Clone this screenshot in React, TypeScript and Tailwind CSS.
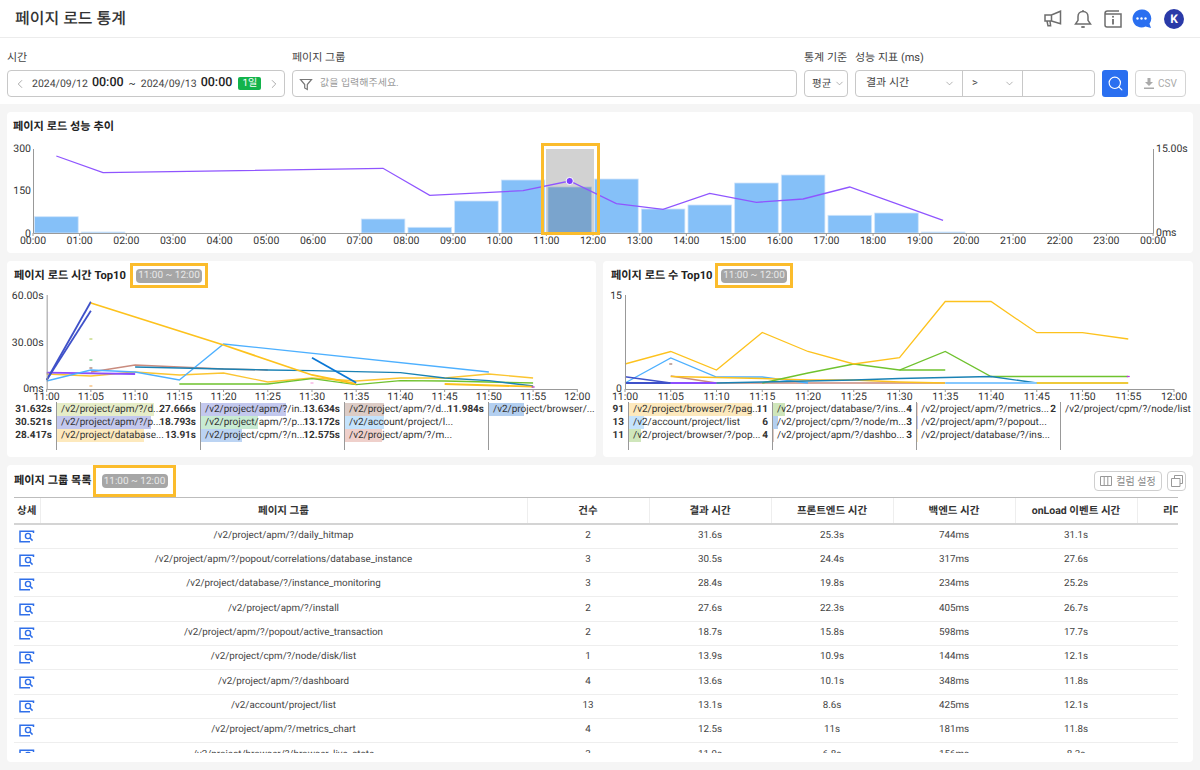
import React from 'react';
import { ChevronDown, ChevronLeft, ChevronRight, Search } from 'lucide-react';

const barHeights = [16.3, 1, 0, 0, 0, 0, 0, 14, 5.7, 32, 53, 46, 54, 24, 28, 50, 58, 17.7, 20, 1, 0, 0, 0, 0];
const trend: [number, number][] = [[0.5, 156], [1.5, 172.7], [7.5, 168.3], [8.5, 195.3], [10.5, 190.7], [11.5, 181], [12.5, 203.7], [13.5, 209.3], [14.5, 193.3], [15.5, 202.3], [16.5, 199], [17.5, 187], [19.5, 220.3]];

type Series = { color: string; width?: number; pts: [number, number][] };

const loadTimeSeries: Series[] = [
  { color: '#fbc531', width: 1.3, pts: [[0, 374], [1, 376], [2, 372], [3, 375], [4, 373], [5, 382], [6, 378], [7, 381], [8, 378], [9, 378], [10, 374], [11, 378]] },
  { color: '#c98b7e', width: 1.3, pts: [[1, 372], [2, 365], [3, 367], [4, 369], [5, 370]] },
  { color: '#8c4dff', width: 1.8, pts: [[0, 372.6], [2, 374]] },
  { color: '#4db0ff', width: 1.3, pts: [[0, 381], [1, 370], [2, 372], [3, 380], [4, 344], [10, 372]] },
  { color: '#6fc22e', width: 1.3, pts: [[3, 384], [5, 384], [6, 378.7], [7, 384.7], [8, 380.7], [9, 381], [11, 383]] },
  { color: '#1a82b4', width: 1.3, pts: [[2, 367], [3, 368], [4, 369], [5, 370], [6, 370.7], [8, 372.7], [9, 378], [10, 380.7], [11, 386]] },
  { color: '#3f51c9', width: 1.8, pts: [[0, 380], [1, 301.7]] },
  { color: '#3f51c9', width: 1.8, pts: [[0, 380], [1, 310.7]] },
  { color: '#fdc21d', width: 1.8, pts: [[1, 303], [4, 345], [6, 375], [7, 384]] },
  { color: '#0a77d5', width: 1.8, pts: [[6, 357.7], [7, 382.7]] },
  { color: '#fdc21d', width: 1.8, pts: [[9, 384], [11, 386.7]] },
];

const loadCountSeries: Series[] = [
  { color: '#c98b7e', width: 1.3, pts: [[1, 376], [2, 383], [7, 383]] },
  { color: '#4db0ff', width: 1.3, pts: [[0, 383], [1, 358], [2, 377], [3, 377], [4, 383]] },
  { color: '#3f51c9', width: 1.5, pts: [[0, 376.7], [1, 383]] },
  { color: '#3f51c9', width: 1.8, pts: [[0, 383], [1, 383]] },
  { color: '#8c4dff', width: 1.8, pts: [[1, 383], [2, 383]] },
  { color: '#fdc21d', width: 1.4, pts: [[1, 376.5], [2, 377.5], [3, 378.5], [4, 380], [5, 380], [6, 382], [7, 383]] },
  { color: '#6fc22e', width: 1.3, pts: [[3, 383], [4, 373], [5, 364], [6, 370], [7, 351.5], [8, 376.5], [11, 376.5]] },
  { color: '#6fc22e', width: 1.3, pts: [[6, 370], [7, 370]] },
  { color: '#1a82b4', width: 1.4, pts: [[2, 383], [3, 382], [4, 381], [5, 380], [6, 378.5], [8, 376.5], [9, 383]] },
  { color: '#85c8ff', width: 2, pts: [[7, 383], [9, 383]] },
  { color: '#eec93a', width: 2, pts: [[9, 383], [11, 383]] },
  { color: '#fdc21d', width: 1.3, pts: [[0, 364], [1, 351.5], [2, 370], [3, 332.5], [4, 351.5], [5, 364], [6, 357.6], [7, 301.5], [8, 301.5], [9, 332.7], [10, 332.7], [11, 339]] },
];

const timeLabels = ['11:00', '11:05', '11:10', '11:15', '11:20', '11:25', '11:30', '11:35', '11:40', '11:45', '11:50', '11:55', '12:00'];

type LegendRow = { value: string; name: string; color?: string; bar?: number };

const timeLegend: LegendRow[][] = [
  [
    { value: '31.632s', name: '/v2/project/apm/?/d...', color: '#e6edc8', bar: 97 },
    { value: '30.521s', name: '/v2/project/apm/?/p...', color: '#c3c8ee', bar: 94 },
    { value: '28.417s', name: '/v2/project/database...', color: '#fde9bd', bar: 87 },
  ],
  [
    { value: '27.666s', name: '/v2/project/apm/?/in...', color: '#c3c8ee', bar: 85 },
    { value: '18.793s', name: '/v2/project/apm/?/p...', color: '#c8ebd3', bar: 57 },
    { value: '13.91s', name: '/v2/project/cpm/?/n...', color: '#bcd4f3', bar: 41 },
  ],
  [
    { value: '13.634s', name: '/v2/project/apm/?/d...', color: '#dcccc6', bar: 39 },
    { value: '13.172s', name: '/v2/account/project/l...', color: '#c5e3fc', bar: 39 },
    { value: '12.575s', name: '/v2/project/apm/?/m...', color: '#efd0cb', bar: 37 },
  ],
  [{ value: '11.984s', name: '/v2/project/browser/...', color: '#b3cff0', bar: 35 }],
];

const countLegend: LegendRow[][] = [
  [
    { value: '91', name: '/v2/project/browser/?/pag...', color: '#fde9bd', bar: 123 },
    { value: '13', name: '/v2/account/project/list', color: '#c5e3fc', bar: 15 },
    { value: '11', name: '/v2/project/browser/?/pop...', color: '#cfe6bb', bar: 12 },
  ],
  [
    { value: '11', name: '/v2/project/database/?/ins...', color: '#cfe6bb', bar: 12 },
    { value: '6', name: '/v2/project/cpm/?/node/m...', color: '#b3cff0', bar: 5 },
    { value: '4', name: '/v2/project/apm/?/dashbo...', color: '#dcccc6', bar: 1 },
  ],
  [
    { value: '4', name: '/v2/project/apm/?/metrics...', color: '#efd0cb', bar: 1 },
    { value: '3', name: '/v2/project/apm/?/popout...', color: '#c3c8ee', bar: 1 },
    { value: '3', name: '/v2/project/database/?/ins...', color: '#fde9bd', bar: 1 },
  ],
  [{ value: '2', name: '/v2/project/cpm/?/node/list' }],
];

const rows = [
  ['/v2/project/apm/?/daily_hitmap', '2', '31.6s', '25.3s', '744ms', '31.1s'],
  ['/v2/project/apm/?/popout/correlations/database_instance', '3', '30.5s', '24.4s', '317ms', '27.6s'],
  ['/v2/project/database/?/instance_monitoring', '3', '28.4s', '19.8s', '234ms', '25.2s'],
  ['/v2/project/apm/?/install', '2', '27.6s', '22.3s', '405ms', '26.7s'],
  ['/v2/project/apm/?/popout/active_transaction', '2', '18.7s', '15.8s', '598ms', '17.7s'],
  ['/v2/project/cpm/?/node/disk/list', '1', '13.9s', '10.9s', '144ms', '12.1s'],
  ['/v2/project/apm/?/dashboard', '4', '13.6s', '10.1s', '348ms', '11.8s'],
  ['/v2/account/project/list', '13', '13.1s', '8.6s', '425ms', '12.1s'],
  ['/v2/project/apm/?/metrics_chart', '4', '12.5s', '11s', '181ms', '11.8s'],
  ['/v2/project/browser/?/browser_live_state', '3', '11.9s', '6.8s', '156ms', '8.3s'],
];

const headers = ['상세', '페이지 그룹', '건수', '결과 시간', '프론트엔드 시간', '백엔드 시간', 'onLoad 이벤트 시간', '리다이렉트 시간'];

const poly = (pts: [number, number][], x0: number, step: number) =>
  pts.map(([i, y]) => `${x0 + i * step},${y}`).join(' ');

function RangeBadge() {
  return <span className="rounded-[4px] bg-[#a6a6a6] h-[14px] w-[66px] flex items-center justify-center text-[10px] font-normal text-[#e8e8e8] whitespace-nowrap">11:00 ~ 12:00</span>;
}

function TrendChart() {
  const hx = (h: number) => 33 + h * 46.67;
  return (
    <svg viewBox="7 143 1186 108" className="block w-[1186px] h-[108px]">
      {barHeights.map((h, i) => h > 0 && (
        <rect key={i} x={hx(i) + 1.6} y={233 - h} width={43.6} height={h} fill="#85c0f8" stroke="#cfe4fb" strokeWidth="0.8" />
      ))}
      <rect x={546} y={149} width={48} height={84} fill="#5d5d5d" fillOpacity="0.28" />
      <polyline points={trend.map(([h, y]) => `${hx(h)},${y}`).join(' ')} fill="none" stroke="#8f55ff" strokeWidth="1.3" />
      <circle cx={hx(11.5)} cy={181} r="3.6" fill="#7a3fff" stroke="#fff" strokeWidth="1" />
      <path d="M33.5 149V233.5H1153.5V149" fill="none" stroke="#999" strokeWidth="1" />
      {Array.from({ length: 25 }, (_, i) => (
        <g key={i}>
          <line x1={hx(i)} x2={hx(i)} y1={233} y2={236} stroke="#999" />
          <text x={hx(i)} y={244} textAnchor="middle" fontSize="10.5" fill="#333">{`${String(i === 24 ? 0 : i).padStart(2, '0')}:00`}</text>
        </g>
      ))}
      <text x={31} y={152} textAnchor="end" fontSize="10.5" fill="#333">300</text>
      <text x={31} y={194} textAnchor="end" fontSize="10.5" fill="#333">150</text>
      <text x={31} y={237} textAnchor="end" fontSize="10.5" fill="#333">0</text>
      <text x={1156} y={152} fontSize="10.5" fill="#333">15.00s</text>
      <text x={1156} y={236} fontSize="10.5" fill="#333">0ms</text>
      <rect x={542.5} y={144.5} width={56} height={89} fill="none" stroke="#fbbc2c" strokeWidth="3" />
    </svg>
  );
}

function TopChart({ x0, step, series, yLabels, vx, dots, width }: {
  x0: number; step: number; series: Series[]; yLabels: [string, number][]; vx: number; width: number;
  dots: [number, number, string][];
}) {
  return (
    <svg viewBox={`${vx} 290 ${width} 112`} width={width} height={112} className="block">
      {series.map((s, i) => (
        <polyline key={i} points={poly(s.pts, x0, step)} fill="none" stroke={s.color} strokeWidth={s.width ?? 1.3} />
      ))}
      {dots.map(([i, y, c], k) => <rect key={k} x={x0 + i * step - 1.5} y={y - 0.6} width="3" height="1.2" fill={c} />)}
      <path d={`M${x0 + 0.5} 295V389.5H${x0 + 12 * step}`} fill="none" stroke="#999" />
      {timeLabels.map((t, i) => (
        <g key={t}>
          <line x1={x0 + i * step} x2={x0 + i * step} y1={389} y2={392} stroke="#999" />
          <text x={x0 + i * step} y={400} textAnchor="middle" fontSize="10.5" fill="#333">{t}</text>
        </g>
      ))}
      {yLabels.map(([t, y]) => <text key={t} x={x0 - 3} y={y} textAnchor="end" fontSize="10.5" fill="#333">{t}</text>)}
    </svg>
  );
}

function Legend({ cols, valueWidth, nameWidth }: { cols: LegendRow[][]; valueWidth: string; nameWidth: string }) {
  return (
    <div className="flex h-[48px] text-[10px] leading-[13px] text-[#333]">
      {cols.map((col, i) => (
        <div key={i} className="flex">
          <div className={`${valueWidth} pr-[4px] pt-[1px] text-right font-bold whitespace-nowrap`}>
            {col.map((r) => <div key={r.name} className="h-[13px]">{r.value}</div>)}
          </div>
          <div className={`${nameWidth} border-l border-[#999] pt-[1px]`}>
            {col.map((r) => (
              <div key={r.name} className="relative h-[13px] pl-[4px] whitespace-nowrap">
                {r.bar ? <div className="absolute left-0 top-0 h-[13px]" style={{ width: r.bar, backgroundColor: r.color }} /> : null}
                <span className="relative">{r.name}</span>
              </div>
            ))}
          </div>
        </div>
      ))}
    </div>
  );
}

function DetailIcon() {
  return (
    <svg width="16" height="13" viewBox="0 0 16 13" fill="none" className="block">
      <path d="M14.5 3V1.2H1V11.8H11" stroke="#2f6fe9" strokeWidth="1.5" />
      <circle cx="9" cy="6" r="2.6" stroke="#2f6fe9" strokeWidth="1.4" />
      <path d="M11 8l2.6 2.6" stroke="#2f6fe9" strokeWidth="1.5" />
    </svg>
  );
}

export default function App() {
  return (
    <div className="w-[1200px] h-[770px] overflow-hidden bg-[#f5f5f5] font-[Roboto,'Noto_Sans_CJK_KR',sans-serif] text-[#333] [text-rendering:geometricPrecision]">
      <header className="h-[38px] bg-white border-b border-[#ececec] pl-[15px] pr-[16px] flex items-center">
        <h1 className="text-[16px] font-medium text-[#333]">페이지 로드 통계</h1>
        <div className="ml-auto flex items-center">
          <svg width="18" height="17" viewBox="0 0 18 17" fill="none" stroke="#6d6d6d" strokeWidth="1.5" className="mr-[12px]">
            <path d="M1 5h6.500L16.500 1.200v12.600L7.500 11H1zM7.500 5v6M3 11l1 4.800h2.600L6 11" />
          </svg>
          <svg width="18" height="20" viewBox="0 0 18 20" fill="none" stroke="#6d6d6d" strokeWidth="1.5" className="mr-[12px]">
            <path d="M9 2.500c-3.200 0-5 2.400-5 5.200v3.600L1.500 15h15L14 11.300V7.700c0-2.800-1.800-5.200-5-5.200zM9 1v1.500" />
            <path d="M7.300 18h3.400" strokeWidth="1.800" />
          </svg>
          <svg width="18" height="18" viewBox="0 0 18 18" fill="none" className="mr-[10px]">
            <path d="M15 1H3.500C2 1 1 2 1 3.500V15c0 1 .8 2 2 2h14V4H1.500" stroke="#6d6d6d" strokeWidth="1.500" />
            <path d="M9 9v5.500" stroke="#6d6d6d" strokeWidth="1.800" />
            <circle cx="9" cy="6.800" r="1" fill="#6d6d6d" />
          </svg>
          <svg width="20" height="20" viewBox="0 0 20 20" className="mr-[12px]">
            <path d="M9.500 0.500a9 9 0 1 0 4 17.100l5.500 1.400-1.500-4.300a9 9 0 0 0-8-14.200z" fill="#2a6ff0" />
            <circle cx="5.500" cy="9.500" r="1.200" fill="#fff" />
            <circle cx="9.500" cy="9.500" r="1.200" fill="#fff" />
            <circle cx="13.500" cy="9.500" r="1.200" fill="#fff" />
          </svg>
          <div className="w-[20px] h-[20px] rounded-full bg-[#2a3aa8] text-white text-[12px] font-bold flex items-center justify-center">K</div>
        </div>
      </header>

      <section className="h-[66px] bg-white pl-[7px] pt-[12px] text-[11px]">
        <div className="flex gap-[7px] h-[20px] items-start text-[#444]">
          <label className="w-[278px]">시간</label>
          <label className="w-[505px]">페이지 그룹</label>
          <label className="w-[44px] whitespace-nowrap">통계 기준</label>
          <label className="w-[240px]">성능 지표 (ms)</label>
        </div>
        <div className="flex gap-[7px] h-[27px] items-stretch">
          <div className="w-[278px] border border-[#c8c8c8] rounded-[4px] flex items-center pl-[5px] text-[10.5px] text-[#444] whitespace-nowrap">
            <ChevronLeft size={14} strokeWidth={1.2} color="#888" />
            <span className="ml-[5px]">2024/09/12</span>
            <span className="ml-[4px] text-[12.500px] font-medium text-[#222]">00:00</span>
            <span className="ml-[5px]">~</span>
            <span className="ml-[5px]">2024/09/13</span>
            <span className="ml-[4px] text-[12.500px] font-medium text-[#222]">00:00</span>
            <span className="ml-[6px] w-[23px] h-[13px] bg-[#12b34b] rounded-[2px] text-white text-[10px] flex items-center justify-center">1일</span>
            <ChevronRight size={14} strokeWidth={1.2} color="#888" className="ml-[6px]" />
          </div>
          <div className="w-[505px] border border-[#c8c8c8] rounded-[4px] flex items-center pl-[6px] text-[#999] text-[10px]">
            <svg width="14" height="14" viewBox="0 0 14 14" fill="none" stroke="#777" strokeWidth="1.200" className="mr-[7px]">
              <path d="M1.500 2.500h11L8.300 7.500v5l-2.600-1.500V7.500z" />
            </svg>
            값을 입력해주세요.
          </div>
          <div className="w-[44px] border border-[#c8c8c8] rounded-[4px] flex items-center pl-[7px] text-[#444] text-[10.5px] gap-[3px]">
            <span className="whitespace-nowrap">평균</span>
            <ChevronDown size={11} strokeWidth={1.200} color="#777" className="shrink-0" />
          </div>
          <div className="w-[240px] border border-[#c8c8c8] rounded-[4px] flex items-center text-[#444]">
            <div className="w-[107px] h-full border-r border-[#c8c8c8] flex items-center justify-between pl-[10px] pr-[7px]">
              <span>결과 시간</span>
              <ChevronDown size={11} strokeWidth={1.200} color="#777" />
            </div>
            <div className="w-[60px] h-full border-r border-[#c8c8c8] flex items-center justify-between pl-[9px] pr-[7px]">
              <span>&gt;</span>
              <ChevronDown size={11} strokeWidth={1.200} color="#777" />
            </div>
          </div>
          <button className="w-[26px] rounded-[3px] bg-[#2a6ff0] flex items-center justify-center">
            <Search size={17} color="#fff" strokeWidth={1.600} />
          </button>
          <button className="w-[51px] border border-[#d4d4d4] rounded-[4px] flex items-center justify-center gap-[4px] text-[#aaa] text-[10px]">
            <svg width="10" height="11" viewBox="0 0 10 11" fill="#aaa" className="block">
              <path d="M3.500 0h3v4H9L5 8 1 4h2.500zM0 9.600h10V11H0z" />
            </svg>
            CSV
          </button>
        </div>
      </section>

      <main className="px-[7px] pt-[8px] flex flex-col gap-[8px]">
        <div className="h-[141px] bg-white rounded-[4px]">
          <div className="h-[31px] pl-[6px] pt-[7px] text-[11.2px] font-bold text-[#222]">페이지 로드 성능 추이</div>
          <TrendChart />
        </div>

        <div className="flex gap-[7px]">
          <div className="w-[589px] h-[196px] bg-white rounded-[4px]">
            <div className="h-[29px] pl-[7px] pt-[2px] flex items-start text-[11.2px] font-bold text-[#222]">
              <span className="mt-[5px] w-[116px] whitespace-nowrap">페이지 로드 시간 Top10</span>
              <div className="w-[78px] h-[25px] border-[3px] border-[#fbbc2c] flex items-center justify-center">
                <RangeBadge />
              </div>
            </div>
            <TopChart x0={46.67} step={44.22} vx={7} width={589} series={loadTimeSeries}
              yLabels={[['60.00s', 299], ['30.00s', 346], ['0ms', 392]]}
              dots={[[1, 339, '#bcd36a'], [1, 360, '#62c27f'], [1, 368, '#a0766b'], [1, 386, '#f5b66a'], [6, 383, '#f3a6dc'], [11, 387, '#a030c8']]} />
            <div className="pl-[8px]"><Legend cols={timeLegend} valueWidth="w-[41px]" nameWidth="w-[103px]" /></div>
          </div>
          <div className="w-[590px] h-[196px] bg-white rounded-[4px]">
            <div className="h-[29px] pl-[8px] pt-[2px] flex items-start text-[11.2px] font-bold text-[#222]">
              <span className="mt-[5px] w-[104px] whitespace-nowrap">페이지 로드 수 Top10</span>
              <div className="w-[78px] h-[25px] border-[3px] border-[#fbbc2c] flex items-center justify-center">
                <RangeBadge />
              </div>
            </div>
            <TopChart x0={625} step={45.75} vx={603} width={590} series={loadCountSeries}
              yLabels={[['15', 299], ['0', 392]]}
              dots={[[1, 364, '#a0766b'], [11, 376.5, '#c030e8']]} />
            <div className="pl-[7px]"><Legend cols={countLegend} valueWidth="w-[18px]" nameWidth="w-[126px]" /></div>
          </div>
        </div>

        <div className="h-[297px] bg-white rounded-[4px] px-[7px] overflow-hidden">
          <div className="h-[32px] flex items-start">
            <span className="mt-[8px] w-[79px] text-[11.2px] font-bold text-[#222] whitespace-nowrap">페이지 그룹 목록</span>
            <div className="w-[83px] h-[32px] border-[3px] border-[#fbbc2c] flex items-center justify-center">
              <RangeBadge />
            </div>
            <div className="ml-auto mt-[6px] flex gap-[5px]">
              <button className="w-[68px] h-[20px] border border-[#cfcfcf] rounded-[4px] flex items-center justify-center gap-[4px] text-[10px] text-[#888]">
                <svg width="12" height="10" viewBox="0 0 12 10" fill="none" stroke="#999"><path d="M.5.500h11v9H.5zM4.200.500v9M7.800.500v9" /></svg>
                컬럼 설정
              </button>
              <button className="w-[19px] h-[20px] border border-[#cfcfcf] rounded-[4px] flex items-center justify-center">
                <svg width="12" height="12" viewBox="0 0 12 12" fill="none" stroke="#999"><path d="M3.500 3V.500h8v8H9M.500 3.500h8.500v8H.500z" /></svg>
              </button>
            </div>
          </div>
          <div className="w-[1164px] h-[256px] overflow-hidden border-t border-[#bdbdbd]">
            <table className="table-fixed w-[1245px] border-collapse text-[9.800px] text-[#444]">
              <colgroup>
                <col className="w-[26px]" />
                <col className="w-[487px]" />
                <col className="w-[122px]" />
                <col className="w-[122px]" />
                <col className="w-[122px]" />
                <col className="w-[122px]" />
                <col className="w-[122px]" />
                <col className="w-[122px]" />
              </colgroup>
              <thead>
                <tr className="h-[26px] border-b-2 border-[#d4d4d4]">
                  {headers.map((h) => (
                    <th key={h} className="text-[10.5px] font-bold text-[#333] border-r border-[#eeeeee] whitespace-nowrap p-0">{h}</th>
                  ))}
                </tr>
              </thead>
              <tbody>
                {rows.map((r) => (
                  <tr key={r[0]} className="h-[24.330px] border-b border-[#eeeeee] text-center">
                    <td className="p-0"><div className="flex justify-center"><DetailIcon /></div></td>
                    {r.map((c, i) => <td key={i} className="p-0 whitespace-nowrap">{c}</td>)}
                    <td className="p-0" />
                  </tr>
                ))}
              </tbody>
            </table>
          </div>
        </div>
      </main>
    </div>
  );
}
